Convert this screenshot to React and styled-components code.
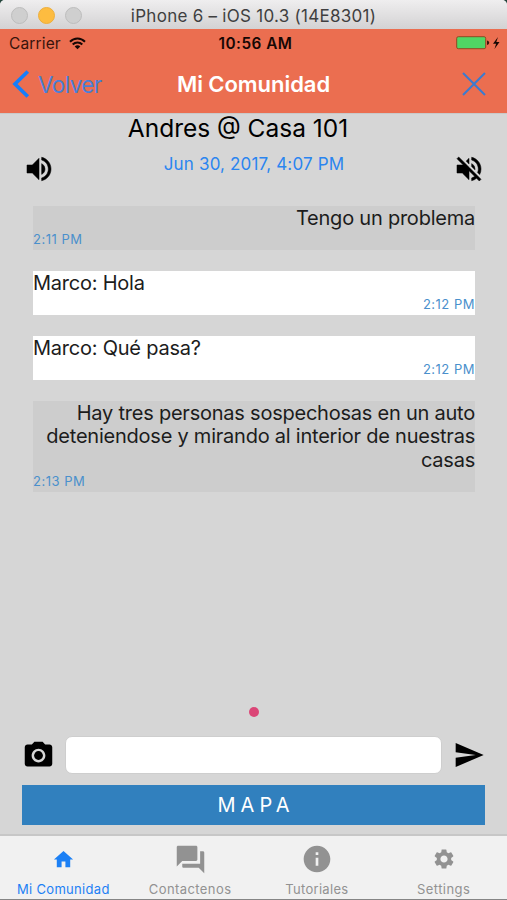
import React, { useState } from "react";
import styled, { createGlobalStyle } from "styled-components";
import {
  MdForum,
  MdHome,
  MdInfo,
  MdPhotoCamera,
  MdSend,
  MdSettings,
  MdVolumeOff,
  MdVolumeUp,
} from "react-icons/md";

const messages = [
  { id: 1, text: "Tengo un problema", time: "2:11 PM", own: true },
  { id: 2, text: "Marco: Hola", time: "2:12 PM" },
  { id: 3, text: "Marco: Qué pasa?", time: "2:12 PM" },
  {
    id: 4,
    text: "Hay tres personas sospechosas en un auto deteniendose y mirando al interior de nuestras casas",
    time: "2:13 PM",
    own: true,
  },
];

const tabs = [
  { name: "Mi Comunidad", icon: MdHome, size: 23, spacing: 0.32 },
  { name: "Contactenos", icon: MdForum, size: 33, spacing: 0.42 },
  { name: "Tutoriales", icon: MdInfo, size: 32, spacing: 0.3 },
  { name: "Settings", icon: MdSettings, size: 24, spacing: 0.42 },
];

const WindowBar = () => (
  <TitleBar>
    <Lights>
      <Light />
      <Light $active />
      <Light />
    </Lights>
    <WindowTitle>iPhone 6 – iOS 10.3 (14E8301)</WindowTitle>
    <span />
  </TitleBar>
);

const Status = () => (
  <StatusBar>
    <Carrier>
      <span>Carrier</span>
      <svg width="17" height="13" viewBox="0 0 17 13">
        <g fill="none" stroke="currentColor" strokeWidth="2">
          <path d="M1 4.8C5.2.5 11.8.5 16 4.8" />
          <path d="M3.7 7.5c2.7-2.7 6.9-2.7 9.6 0" />
        </g>
        <path d="M5.7 9.4c1.6-1.5 4-1.5 5.6 0L8.5 12.2z" fill="currentColor" />
      </svg>
    </Carrier>
    <Clock>10:56 AM</Clock>
    <Battery>
      <svg width="44" height="14" viewBox="0 0 44 14">
        <rect x="0.7" y="0.7" width="29" height="12" rx="1.6" fill="#50d664" stroke="#8e4a22" />
        <path d="M31 4.5q2.2.4 2.2 2.2T31 9z" fill="#3a150c" />
        <path d="M42 1l-5 6.8h3.1L38.5 13l5-7h-3.2z" fill="#160704" />
      </svg>
    </Battery>
  </StatusBar>
);

const App = () => {
  const [currentTab, setCurrentTab] = useState("Mi Comunidad");
  const [draft, setDraft] = useState("");

  return (
    <Screen>
      <GlobalStyle />
      <WindowBar />
      <Header>
        <Status />
        <NavBar>
          <Back>
            <svg width="18" height="28" viewBox="0 0 18 28">
              <path d="M15.8 1.5L3 14l12.8 12.5" fill="none" stroke="#157efb" strokeWidth="3.7" />
            </svg>
            Volver
          </Back>
          <NavTitle>Mi Comunidad</NavTitle>
          <Close>
            <svg width="24" height="24" viewBox="0 0 24 24">
              <path d="M1 1l22 22M23 1L1 23" fill="none" stroke="#3b7bd0" strokeWidth="2" />
            </svg>
          </Close>
        </NavBar>
      </Header>
      <Chat>
        <Room>Andres @ Casa 101</Room>
        <Info>
          <MdVolumeUp size={32} />
          <DateText>Jun 30, 2017, 4:07 PM</DateText>
          <MdVolumeOff size={32} />
        </Info>
        <Messages>
          {messages.map(({ id, text, time, own }) => (
            <Message key={id} $own={own}>
              <p>{text}</p>
              <Time $own={own}>{time}</Time>
            </Message>
          ))}
        </Messages>
        <Dot />
        <Composer>
          <MdPhotoCamera size={33} />
          <Input value={draft} onChange={(e) => setDraft(e.target.value)} />
          <MdSend size={32} />
        </Composer>
        <MapButton>MAPA</MapButton>
      </Chat>
      <TabBar>
        {tabs.map(({ name, icon: Icon, size, spacing }) => (
          <Tab
            key={name}
            $active={name === currentTab}
            $spacing={spacing}
            onClick={() => setCurrentTab(name)}
          >
            <TabIcon>
              <Icon size={size} />
            </TabIcon>
            <span>{name}</span>
          </Tab>
        ))}
      </TabBar>
    </Screen>
  );
};

export default App;

const GlobalStyle = createGlobalStyle`
  * {
    box-sizing: border-box;
  }
  body, p, h1, h2 {
    margin: 0;
  }
  body {
    font-family: Inter, "Liberation Sans", sans-serif;
    background: #24453c;
    overflow: hidden;
  }
  button {
    font-family: inherit;
    padding: 0;
    border: none;
    background: none;
  }
  svg {
    display: block;
    flex-shrink: 0;
  }
`;

const Screen = styled.div`
  width: 507px;
  height: 900px;
  display: flex;
  flex-direction: column;
  background: #d6d6d6;
  border-radius: 5px 5px 0 0;
  border-bottom: 1px solid #858585;
`;

const TitleBar = styled.div`
  height: 29px;
  flex-shrink: 0;
  display: grid;
  grid-template-columns: 1fr auto 1fr;
  align-items: center;
  padding-top: 2px;
  background: linear-gradient(#efeeef, #d3d2d3);
  border-radius: 5px 5px 0 0;
`;

const Lights = styled.div`
  display: flex;
  gap: 10px;
  padding-left: 11px;
`;

const Light = styled.span`
  width: 17px;
  height: 17px;
  border-radius: 50%;
  background: ${({ $active }) => ($active ? "#fdbc40" : "#cfcfcf")};
  border: 1px solid ${({ $active }) => ($active ? "#edaf3d" : "#bdbdbd")};
`;

const WindowTitle = styled.span`
  font-size: 17px;
  letter-spacing: 0.27px;
  color: #3f3f40;
  white-space: nowrap;
`;

const Header = styled.header`
  height: 84px;
  flex-shrink: 0;
  background: #eb6e50;
`;

const StatusBar = styled.div`
  height: 27px;
  display: grid;
  grid-template-columns: 1fr auto 1fr;
  align-items: center;
  padding: 1px 7px 0 9px;
`;

const Carrier = styled.div`
  display: flex;
  align-items: center;
  gap: 8px;
  font-size: 15.5px;
  letter-spacing: 0.15px;
  color: #39140c;
  svg {
    color: #160704;
  }
`;

const Clock = styled.span`
  font-size: 15.3px;
  font-weight: 600;
  letter-spacing: 0.5px;
  padding-left: 2px;
  color: #160704;
`;

const Battery = styled.div`
  display: flex;
  justify-content: flex-end;
`;

const NavBar = styled.div`
  height: 57px;
  display: grid;
  grid-template-columns: 1fr auto 1fr;
  align-items: center;
  padding: 0 21px 1px 12px;
`;

const Back = styled.button`
  display: flex;
  align-items: center;
  gap: 8px;
  font-size: 22.5px;
  letter-spacing: -0.6px;
  color: #4a7fd6;
`;

const NavTitle = styled.h1`
  font-size: 22px;
  font-weight: 600;
  letter-spacing: -0.05px;
  color: #fff;
  padding-left: 9px;
`;

const Close = styled.button`
  justify-self: end;
`;

const Chat = styled.main`
  flex: 1;
  min-height: 0;
  display: flex;
  flex-direction: column;
  color: #000;
  border-top: 1px solid #c9c9c9;
`;

const Room = styled.h2`
  height: 30px;
  line-height: 29px;
  text-align: center;
  font-size: 24.5px;
  font-weight: 400;
  padding-right: 31px;
`;

const Info = styled.div`
  height: 48px;
  display: flex;
  justify-content: space-between;
  padding: 9px 22px 0 23px;
  path:not([fill="none"]) {
    stroke: currentColor;
    stroke-width: 0.4px;
  }
`;

const DateText = styled.p`
  margin-top: 1px;
  font-size: 17px;
  line-height: 20px;
  letter-spacing: 0.16px;
  color: #2a85f0;
`;

const Messages = styled.div`
  flex: 1;
  display: flex;
  flex-direction: column;
  gap: 21px;
  padding: 14px 32px 0 33px;
`;

const Message = styled.div`
  min-height: 44px;
  padding-top: 1px;
  font-size: 20px;
  line-height: 23.4px;
  letter-spacing: -0.23px;
  color: #1c1c1c;
  background: ${({ $own }) => ($own ? "#cdcdcd" : "#fff")};
  text-align: ${({ $own }) => ($own ? "right" : "left")};
`;

const Time = styled.p`
  font-size: 13px;
  line-height: 19.6px;
  letter-spacing: 0.5px;
  color: #4a90cc;
  text-align: ${({ $own }) => ($own ? "left" : "right")};
`;

const Dot = styled.span`
  width: 10px;
  height: 10px;
  margin: 0 auto 19px;
  border-radius: 50%;
  background: #db4677;
`;

const Composer = styled.div`
  display: flex;
  align-items: center;
  justify-content: space-between;
  padding: 0 22px;
`;

const Input = styled.input`
  width: 377px;
  height: 38px;
  margin-right: 2px;
  border: 1px solid #cecece;
  border-radius: 7px;
  background: #fff;
  font-size: 18px;
  outline: none;
`;

const MapButton = styled.button`
  height: 40px;
  margin: 11px 22px 9px;
  padding-left: 5px;
  background: #3180be;
  color: #fff;
  font-size: 20px;
  letter-spacing: 5px;
`;

const TabBar = styled.nav`
  height: 65px;
  flex-shrink: 0;
  display: grid;
  grid-template-columns: repeat(4, 1fr);
  border-top: 2px solid #c7c7c7;
  background: #f1f1f1;
`;

const Tab = styled.button`
  display: flex;
  flex-direction: column;
  align-items: center;
  justify-content: flex-start;
  font-size: 13px;
  line-height: 16px;
  letter-spacing: ${({ $spacing }) => $spacing}px;
  color: ${({ $active }) => ($active ? "#1c80f5" : "#929292")};
`;

const TabIcon = styled.span`
  height: 45px;
  padding-top: 1px;
  display: flex;
  align-items: center;
`;
